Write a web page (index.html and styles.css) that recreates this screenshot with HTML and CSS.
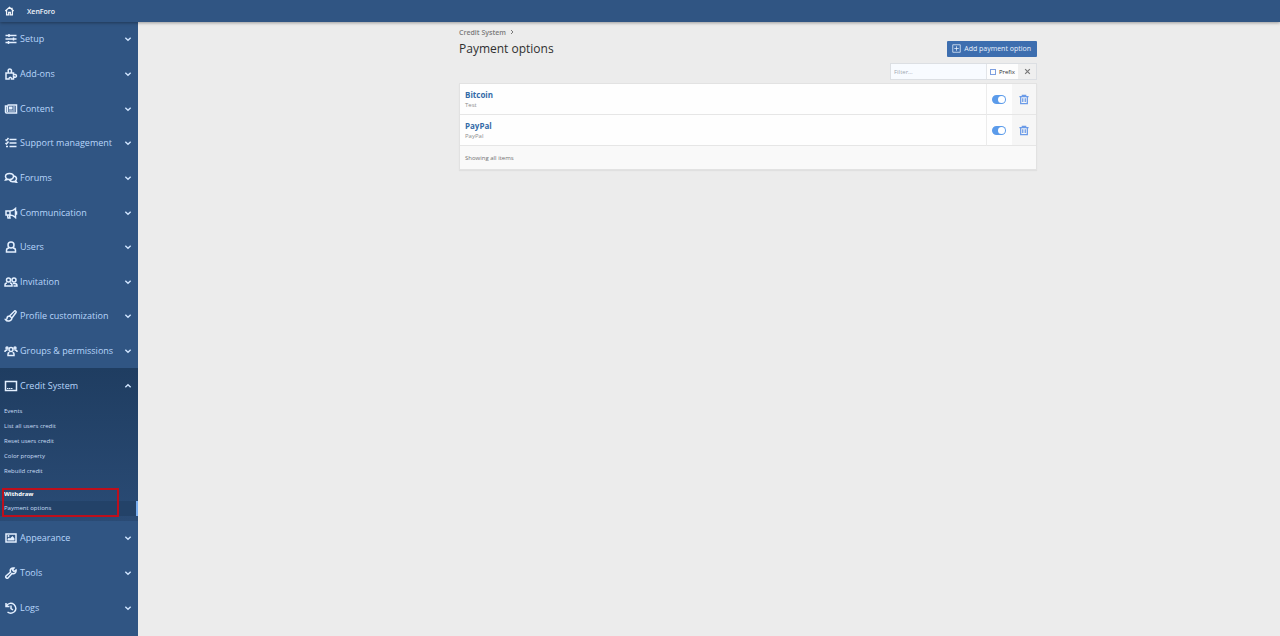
FILE: index.html
```html
<!DOCTYPE html>
<html lang="en">
<head>
<meta charset="utf-8">
<title>Payment options | XenForo</title>
<link rel="stylesheet" href="styles.css">
</head>
<body>
<header class="topbar">
  <a class="topbar-home" href="#" aria-label="Home"><svg viewBox="0 0 24 24"><path d="M2 12 12 3l10 9M5 10v11h5v-6h4v6h5V10M18 4v4"/></svg></a>
  <a class="topbar-title" href="#">XenForo</a>
</header>
<div class="layout">
  <nav class="sidebar" aria-label="Admin">
    <ul class="nav">
      <li class="nav-item"><button class="nav-link"><svg class="icon" viewBox="0 0 24 24"><path d="M1 5h22M1 12h22M1 19h22M8 2v6M17 9v6M7 16v6"/></svg><span>Setup</span><svg class="chevron" viewBox="0 0 12 12"><path d="m2 4 4 4 4-4"/></svg></button></li>
      <li class="nav-item"><button class="nav-link"><svg class="icon" viewBox="0 0 24 24"><path d="M2 10h6C5 6 6 2 9.500 2s5 4 2 8H17v4c2-2 6-1 6 2s-4 3-6 1v5h-4c0-5-5-5-5 0H2z"/></svg><span>Add-ons</span><svg class="chevron" viewBox="0 0 12 12"><path d="m2 4 4 4 4-4"/></svg></button></li>
      <li class="nav-item"><button class="nav-link"><svg class="icon" viewBox="0 0 24 24"><path d="M5 4h18v16H3a2 2 0 0 1-2-2V6h4v12"/><path class="solid" d="M8 7h7v6H8zM16 7h4v2h-4zM16 11h4v2h-4zM8 15h12v2H8z"/></svg><span>Content</span><svg class="chevron" viewBox="0 0 12 12"><path d="m2 4 4 4 4-4"/></svg></button></li>
      <li class="nav-item"><button class="nav-link"><svg class="icon" viewBox="0 0 24 24"><path d="M9 5h14M9 12h14M9 19h14M1 5l2 2 4-5M1 12l2 2 4-5M2 19h4"/></svg><span>Support management</span><svg class="chevron" viewBox="0 0 12 12"><path d="m2 4 4 4 4-4"/></svg></button></li>
      <li class="nav-item"><button class="nav-link"><svg class="icon" viewBox="0 0 24 24"><path d="M9 3c-4.500 0-8 2.500-8 6 0 2 1 3 2 4l-2 3c2 0 4-1 5-1.500 6 1.500 11-1 11-5.500 0-3.500-3.500-6-8-6zM18 8c3 .5 5 3 5 5.500 0 2-1 3-2 4l2 3c-2 0-4-1-5-1.500-4 1-7 0-9-3"/></svg><span>Forums</span><svg class="chevron" viewBox="0 0 12 12"><path d="m2 4 4 4 4-4"/></svg></button></li>
      <li class="nav-item"><button class="nav-link"><svg class="icon" viewBox="0 0 24 24"><path d="M2 8h8c4 0 8-2 11-5v18c-3-3-7-5-11-5H2zM10 8v8M5 16l1 6h4l-1-6M21 10v4h2v-4z"/></svg><span>Communication</span><svg class="chevron" viewBox="0 0 12 12"><path d="m2 4 4 4 4-4"/></svg></button></li>
      <li class="nav-item"><button class="nav-link"><svg class="icon" viewBox="0 0 24 24"><circle cx="12" cy="8" r="6"/><path d="M8 14c-3 0-5 2-5 5v3h18v-3c0-3-2-5-5-5"/></svg><span>Users</span><svg class="chevron" viewBox="0 0 12 12"><path d="m2 4 4 4 4-4"/></svg></button></li>
      <li class="nav-item"><button class="nav-link"><svg class="icon" viewBox="0 0 24 24"><circle cx="7" cy="8" r="4"/><circle cx="18" cy="8" r="4"/><path d="M4 14c-2 0-4 2-4 4v2h14v-2c0-2-1-4-4-4M16 15h4c2 0 4 2 4 5h-7"/></svg><span>Invitation</span><svg class="chevron" viewBox="0 0 12 12"><path d="m2 4 4 4 4-4"/></svg></button></li>
      <li class="nav-item"><button class="nav-link"><svg class="icon" viewBox="0 0 24 24"><path d="M9 12 19 2c2-1 4 1 3 3l-8 11zM9 12c-3 0-5 2-5 5 0 2-1 2-3 2 3 5 12 4 13-3z"/></svg><span>Profile customization</span><svg class="chevron" viewBox="0 0 12 12"><path d="m2 4 4 4 4-4"/></svg></button></li>
      <li class="nav-item"><button class="nav-link"><svg class="icon" viewBox="0 0 24 24"><circle cx="12" cy="9" r="4"/><circle cx="4" cy="6" r="2"/><circle cx="20" cy="6" r="2"/><path d="M9 15c-2 0-3 1-3 3v3h12v-3c0-2-1-3-3-3M0 14v-1c0-2 2-3 5-3M24 14v-1c0-2-2-3-5-3"/></svg><span>Groups &amp; permissions</span><svg class="chevron" viewBox="0 0 12 12"><path d="m2 4 4 4 4-4"/></svg></button></li>
      <li class="nav-item nav-item-open">
        <button class="nav-link" aria-expanded="true"><svg class="icon" viewBox="0 0 24 24"><path d="M1 3h22v18H1z"/><path class="solid" d="M4 16h3v2H4zM8 16h3v2H8zM12 16h3v2h-3z"/></svg><span>Credit System</span><svg class="chevron" viewBox="0 0 12 12"><path d="m2 8 4-4 4 4"/></svg></button>
        <div class="submenu">
          <a class="submenu-link" href="#">Events</a>
          <a class="submenu-link" href="#">List all users credit</a>
          <a class="submenu-link" href="#">Reset users credit</a>
          <a class="submenu-link" href="#">Color property</a>
          <a class="submenu-link" href="#">Rebuild credit</a>
          <div class="submenu-group">
            <div class="submenu-heading">Withdraw</div>
            <a class="submenu-link submenu-current" href="#">Payment options</a>
          </div>
        </div>
      </li>
      <li class="nav-item"><button class="nav-link"><svg class="icon" viewBox="0 0 24 24"><path d="M2 4h20v16H2z"/><path class="solid" d="M5 17v-3l3-3 2 2 5-5 4 5v4z"/><circle class="solid" cx="7" cy="8" r="2"/></svg><span>Appearance</span><svg class="chevron" viewBox="0 0 12 12"><path d="m2 4 4 4 4-4"/></svg></button></li>
      <li class="nav-item"><button class="nav-link"><svg class="icon" viewBox="0 0 24 24"><path d="M18 2c-5-1-9 3-7 8l-9 8c-2 3 2 6 4 4l8-9c5 2 9-2 8-7l-4 3-3-3z"/></svg><span>Tools</span><svg class="chevron" viewBox="0 0 12 12"><path d="m2 4 4 4 4-4"/></svg></button></li>
      <li class="nav-item"><button class="nav-link"><svg class="icon" viewBox="0 0 24 24"><path d="M3 8c3-6 10-7 15-3 5 5 5 11 0 15-4 3-9 3-13 0M2 2v7h7M12 7v6l4 3"/></svg><span>Logs</span><svg class="chevron" viewBox="0 0 12 12"><path d="m2 4 4 4 4-4"/></svg></button></li>
    </ul>
  </nav>
  <main class="main">
    <div class="breadcrumb"><a href="#">Credit System</a><svg viewBox="0 0 12 12"><path d="m4 2 4 4-4 4"/></svg></div>
    <div class="page-head">
      <h1 class="page-title">Payment options</h1>
      <button class="add-button"><svg viewBox="0 0 24 24"><path d="M2 2h20v20H2zM12 6v12M6 12h12"/></svg>Add payment option</button>
    </div>
    <form class="filter">
      <input class="filter-text" type="text" placeholder="Filter…" aria-label="Filter">
      <label class="filter-prefix"><input type="checkbox">Prefix</label>
      <button class="filter-clear" type="button" aria-label="Clear"><svg viewBox="0 0 12 12"><path d="m2 2 8 8M10 2l-8 8"/></svg></button>
    </form>
    <table class="options">
      <tbody>
        <tr>
          <td class="option"><a class="option-name" href="#">Bitcoin</a><div class="option-note">Test</div></td>
          <td class="option-toggle"><input class="toggle" type="checkbox" checked aria-label="Enable Bitcoin"></td>
          <td class="option-delete"><button class="delete" aria-label="Delete Bitcoin"><svg viewBox="0 0 24 24"><path d="M1 5h22M8 5V2h8v3M4 5v17h16V5M9 9v9M15 9v9"/></svg></button></td>
        </tr>
        <tr>
          <td class="option"><a class="option-name" href="#">PayPal</a><div class="option-note">PayPal</div></td>
          <td class="option-toggle"><input class="toggle" type="checkbox" checked aria-label="Enable PayPal"></td>
          <td class="option-delete"><button class="delete" aria-label="Delete PayPal"><svg viewBox="0 0 24 24"><path d="M1 5h22M8 5V2h8v3M4 5v17h16V5M9 9v9M15 9v9"/></svg></button></td>
        </tr>
      </tbody>
      <tfoot><tr><td class="options-foot" colspan="3">Showing all items</td></tr></tfoot>
    </table>
  </main>
</div>
</body>
</html>
```
FILE: styles.css
```css
* { box-sizing: border-box; }
body {
  margin: 0;
  min-height: 100vh;
  display: flex;
  flex-direction: column;
  background: #ececec;
  color: #303030;
  font-family: "Open Sans", "Noto Sans", sans-serif;
  font-size: 6px;
}
a { color: inherit; text-decoration: none; }
button, input { font: inherit; color: inherit; }
button { margin: 0; padding: 0; border: 0; background: none; cursor: pointer; }
svg { display: block; flex: none; fill: none; stroke: currentColor; stroke-width: 2; }

.topbar {
  display: flex;
  align-items: center;
  gap: 12px;
  height: 22px;
  padding-left: 4px;
  background: #305583;
  color: #f2f6fb;
  box-shadow: 0 1px 3px rgba(0, 0, 0, .35);
  z-index: 1;
}
.topbar-home svg { width: 11px; height: 10px; stroke-width: 3; }
.topbar-title { font-size: 7px; font-weight: 600; }

.layout { display: flex; flex: 1; }
.sidebar {
  display: flex;
  flex: none;
  width: 138px;
  padding-bottom: 11px;
  background: #305583;
  color: #b8d6fb;
}
.nav { flex: 1; display: flex; flex-direction: column; margin: 0; padding: 0; list-style: none; }
.nav-item { flex: 1 0 0; display: flex; flex-direction: column; }
.nav-link {
  flex: 1;
  display: flex;
  align-items: center;
  gap: 2px;
  padding: 0 6px 0 4px;
  font-size: 9px;
  line-height: 12px;
  text-align: left;
}
.nav-link span { flex: 1; white-space: nowrap; }
.icon { width: 14px; height: 12px; color: #e4f0ff; stroke-width: 3; }
.icon .solid { fill: currentColor; stroke: none; }
.chevron { width: 8px; height: 8px; color: #d0e5ff; }

.nav-item-open { flex-basis: 118px; background: linear-gradient(#1f3d61, #2a4b75); }
.submenu { padding: 1px 0 5px; color: #c9ddf5; }
.submenu-link { display: block; padding-left: 4px; line-height: 15px; }
.submenu-group { position: relative; margin-top: 8px; }
.submenu-group::after {
  content: "";
  position: absolute;
  inset: 1px 19px -1px 2px;
  border: 2px solid #bd0f1c;
  pointer-events: none;
}
.submenu-heading { padding-left: 4px; color: #fff; font-weight: 700; line-height: 14px; }
.submenu-current { background: #234268; border-right: 2px solid #79aef0; }

.main { flex: 1; padding: 4px 243px 0 321px; }
.breadcrumb { display: flex; align-items: center; gap: 3px; height: 12px; color: #7a7a7a; font-size: 7px; font-weight: 600; }
.breadcrumb svg { width: 6px; height: 6px; }
.page-head { display: flex; align-items: center; justify-content: space-between; height: 21px; }
.page-title { margin: 0; font-size: 12px; font-weight: 400; line-height: 18px; }
.add-button {
  display: flex;
  align-items: center;
  gap: 3px;
  height: 16px;
  padding: 0 6px 0 5px;
  border-radius: 1px;
  background: #3d6eaf;
  color: #e8f1fc;
  font-size: 7px;
}
.add-button svg { width: 9px; height: 9px; }

.filter {
  display: flex;
  width: 147px;
  height: 17px;
  margin: 4px 0 0 auto;
  border: 1px solid #dcdfe3;
  background: #fdfdfd;
}
.filter-text { flex: 1; min-width: 0; padding: 0 3px; border: 0; background: #f8fbff; outline: 0; }
.filter-text::placeholder { color: #a0a8b2; }
.filter-prefix { display: flex; align-items: center; gap: 3px; padding: 0 3px; border-left: 1px solid #e2e5e9; }
.filter-prefix input { appearance: none; width: 6px; height: 6px; margin: 0; border: 1px solid #7d9fe0; }
.filter-clear { display: grid; place-items: center; width: 18px; background: #efefef; color: #777; }
.filter-clear svg { width: 7px; height: 7px; stroke-width: 2; }

.options {
  width: 100%;
  margin-top: 3px;
  border: 1px solid #e2e2e2;
  border-collapse: separate;
  border-spacing: 0;
  background: #fefefe;
  box-shadow: 0 1px 1px rgba(0, 0, 0, .05);
}
.options td { padding: 0; border-bottom: 1px solid #e6e6e6; }
.options tbody td { height: 31px; }
.options .option { padding: 1px 5px 0; }
.option-name { display: block; color: #336ba8; font-size: 8px; font-weight: 700; line-height: 10px; }
.option-note { color: #8c8c8c; line-height: 10px; }
.options .option-toggle { width: 26px; border-left: 1px solid #ececec; }
.options .option-delete { width: 24px; background: #f6f6f6; }
.toggle {
  appearance: none;
  display: flex;
  justify-content: flex-end;
  align-items: center;
  width: 14px;
  height: 9px;
  margin: 0 5px;
  padding: 1px;
  border-radius: 5px;
  background: #5b9bea;
}
.toggle::before { content: ""; width: 7px; height: 7px; border-radius: 50%; background: #fff; }
.delete { display: block; margin: 0 auto; color: #6b9be8; }
.delete svg { width: 10px; height: 11px; stroke-width: 3; }
.options .options-foot { height: 23px; padding: 0 5px; border-bottom: 0; background: #f9f9f9; color: #707070; }
```
